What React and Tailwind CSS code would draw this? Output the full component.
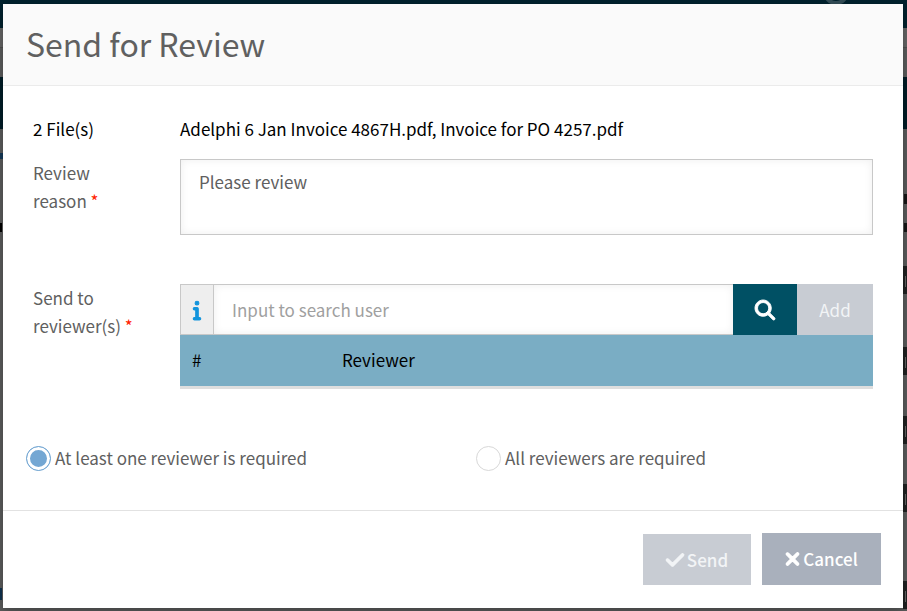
import { FaCheck, FaInfo, FaMagnifyingGlass, FaXmark } from "react-icons/fa6";

const tags = ["top-[266px]", "top-[347px]", "top-[416px]", "top-[484px]", "top-[581px]"];

function Backdrop() {
  return (
    <div aria-hidden="true" className="absolute inset-0 -z-10 overflow-hidden bg-[#5c5d5d]">
      <div className="h-7 bg-[#00222e]" />
      <div className="h-5 border-b border-[#505050] bg-[#666]" />
      <div className="h-[29px]" />
      <div className="h-[52px] bg-[#001c27]" />
      <div className="absolute -top-[21px] right-[58px] size-[26px] rounded-full border-4 border-[#344e58]" />
      <div className="absolute top-[153px] left-0 h-[6px] w-[3px] bg-[#163a58]" />
      <div className="absolute top-[223px] left-0 h-[9px] w-[2px] bg-black" />
      <div className="absolute top-[588px] left-0 h-[12px] w-[2px] bg-[#0f3350]" />
      <div className="absolute top-[194px] right-0 h-[10px] w-[3px] bg-[#161616]" />
      <div className="absolute top-[223px] right-0 h-[9px] w-[3px] bg-[#161616]" />
      {tags.map((top) => (
        <div key={top} className={`absolute right-0 h-[28px] w-1 bg-[#202222] ${top}`}>
          <div className="mt-[10px] ml-[2px] h-[11px] w-px bg-[#666]" />
        </div>
      ))}
    </div>
  );
}

function Required() {
  return <span className="text-[#ff2200]">*</span>;
}

function Choice({ label, ...props }) {
  return (
    <label className="flex w-1/2 items-center gap-1 pl-[23px]">
      <input
        type="radio"
        name="rule"
        className="size-[25px] shrink-0 appearance-none rounded-full border border-[#d8d8d8] bg-white checked:border-[#74a7d3] checked:bg-[#74a7d3] checked:shadow-[inset_0_0_0_3px_white]"
        {...props}
      />
      {label}
    </label>
  );
}

export default function App() {
  return (
    <div className="relative isolate flex min-h-screen flex-col pt-1 pr-1 pb-[3px] pl-[3px] font-['Noto_Sans_CJK_SC',sans-serif] text-[17px] leading-7 text-[#606060]">
      <Backdrop />
      <form
        role="dialog"
        aria-labelledby="title"
        className="flex flex-1 flex-col bg-white shadow-[0_4px_12px_rgba(0,0,0,0.3)]"
        onSubmit={(e) => e.preventDefault()}
      >
        <header className="border-b border-[#ebebeb] bg-[#fafafa] px-[23px] pt-[19px] pb-[21px]">
          <h1 id="title" className="text-[32px] leading-[41px]">Send for Review</h1>
        </header>

        <div className="flex flex-1 flex-col px-[30px] pt-[29px]">
          <div className="flex text-black">
            <div className="w-[147px] shrink-0">2 File(s)</div>
            <div>Adelphi 6 Jan Invoice 4867H.pdf, Invoice for PO 4257.pdf</div>
          </div>

          <div className="mt-4 flex">
            <label htmlFor="reason" className="w-[147px] shrink-0 pr-12">
              Review reason <Required />
            </label>
            <textarea
              id="reason"
              defaultValue="Please review"
              className="h-[76px] min-w-0 flex-1 resize-none border border-[#c8c8c8] px-[18px] py-2 shadow-[inset_0_0_8px_rgba(0,0,0,0.07)] outline-none"
            />
          </div>

          <div className="mt-[49px] flex">
            <label htmlFor="user" className="w-[147px] shrink-0 pr-10">
              Send to reviewer(s) <Required />
            </label>
            <div className="min-w-0 flex-1">
              <div className="flex h-[51px]">
                <span className="flex w-[34px] items-center justify-center border border-[#c8c8c8] bg-[#eee] text-[#1394dc]">
                  <FaInfo className="h-5 w-2 overflow-visible" strokeWidth={28} />
                </span>
                <input
                  id="user"
                  type="text"
                  placeholder="Input to search user"
                  className="min-w-0 flex-1 border-y border-[#c8c8c8] px-[18px] shadow-[inset_0_0_8px_rgba(0,0,0,0.07)] outline-none placeholder:text-[#a0a0a0]"
                />
                <button type="button" aria-label="Search" className="flex w-16 items-center justify-center bg-[#005064] text-white">
                  <FaMagnifyingGlass size={20} className="overflow-visible" strokeWidth={24} />
                </button>
                <button type="button" className="w-[76px] bg-[#c8ccd3] text-[#f2f4f6]">Add</button>
              </div>
              <table className="w-full border-b-3 border-[#dedede] text-black">
                <thead>
                  <tr className="h-[52px] bg-[#7aadc4] text-left">
                    <th className="w-[150px] px-3 font-normal">#</th>
                    <th className="px-3 font-normal">Reviewer</th>
                  </tr>
                </thead>
              </table>
            </div>
          </div>
        </div>

        <div className="flex pb-[38px]">
          <Choice label="At least one reviewer is required" defaultChecked />
          <Choice label="All reviewers are required" />
        </div>

        <footer className="flex items-end justify-end gap-[11px] border-t border-[#e2e2e2] px-[22px] pt-[22px] pb-[23px]">
          <button type="submit" className="flex h-[51px] w-[108px] items-center justify-center gap-[3px] bg-[#c8ccd3] font-medium text-[#f2f4f6]">
            <FaCheck className="h-5 w-[18px] overflow-visible" strokeWidth={28} />
            Send
          </button>
          <button type="button" className="flex h-[52px] w-[119px] items-center justify-center gap-[3px] bg-[#a9b0bc] font-medium text-white">
            <FaXmark className="h-5 w-[15px] overflow-visible" strokeWidth={32} />
            Cancel
          </button>
        </footer>
      </form>
    </div>
  );
}
